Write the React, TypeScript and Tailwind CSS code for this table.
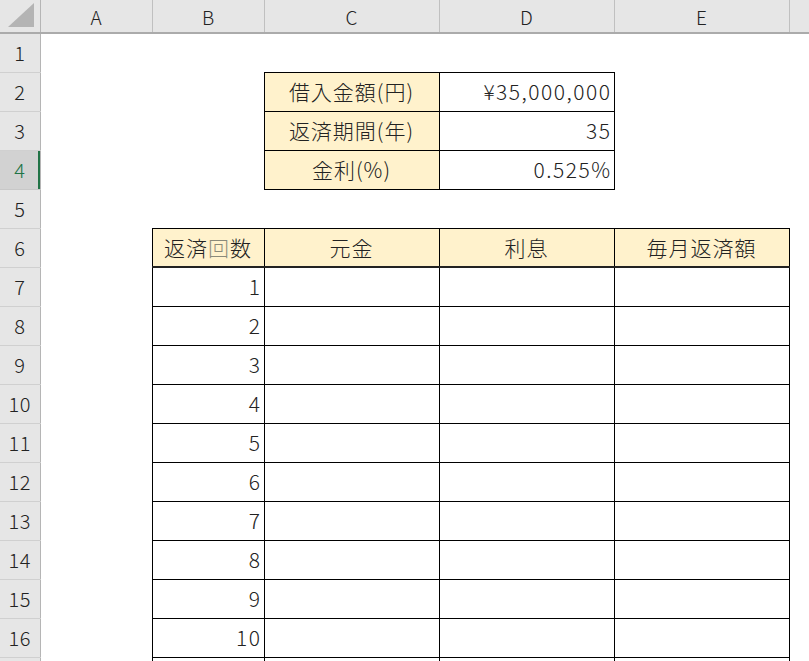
import React from "react";

const cols = ["A", "B", "C", "D", "E", ""];
const colWidths = [40, 112, 112, 175, 175, 175, 20];

const loanInfo = [
  { label: "借入金額(円)", value: "¥35,000,000" },
  { label: "返済期間(年)", value: "35" },
  { label: "金利(%)", value: "0.525%" },
];

const font = { fontFamily: '"Noto Sans CJK JP", "Noto Sans", sans-serif' };

function RowHead({ n, selected }: { n: number; selected?: boolean }) {
  return (
    <td
      className={
        selected
          ? "relative p-0 text-center text-[20px] font-light tracking-[0.5px] text-[#217346] bg-[#d2d2d2] border-b border-b-[#c8c8c8] border-r border-r-[#b5b5b5]"
          : "p-0 text-center text-[20px] font-light tracking-[0.5px] text-[#222] bg-[#e6e6e6] border-b border-b-[#d0d0d0] border-r border-r-[#b5b5b5]"
      }
    >
      {n <= 16 ? n : ""}
      {selected && <span className="absolute right-0 top-0 h-full w-[2px] bg-[#217346]" />}
    </td>
  );
}

const yellow =
  "p-0 bg-[#fff2cc] border border-black text-center text-[21px] font-light tracking-[1px] text-[#222] whitespace-nowrap";
const plain =
  "p-0 bg-white border border-black text-right pr-[2px] text-[21px] font-light tracking-[1.5px] text-[#222] whitespace-nowrap";

export default function App() {
  const rows: React.ReactNode[] = [];

  for (let r = 1; r <= 17; r++) {
    let cells: React.ReactNode;
    if (r >= 2 && r <= 4) {
      const info = loanInfo[r - 2];
      cells = (
        <>
          <td />
          <td />
          <td className={yellow}>{info.label}</td>
          <td className={plain}>{info.value}</td>
          <td />
          <td />
        </>
      );
    } else if (r === 6) {
      cells = (
        <>
          <td />
          <td className={yellow + " border-b-2 border-b-[#222]"}>
            返済<span className="text-[#8a8a7a]">回</span>数
          </td>
          <td className={yellow + " border-b-2 border-b-[#222]"}>元金</td>
          <td className={yellow + " border-b-2 border-b-[#222]"}>利息</td>
          <td className={yellow + " border-b-2 border-b-[#222]"}>毎月返済額</td>
          <td />
        </>
      );
    } else if (r >= 7) {
      cells = (
        <>
          <td />
          <td className={plain}>{r <= 16 ? r - 6 : ""}</td>
          <td className={plain} />
          <td className={plain} />
          <td className={plain} />
          <td />
        </>
      );
    } else {
      cells = (
        <>
          <td />
          <td />
          <td />
          <td />
          <td />
          <td />
        </>
      );
    }
    rows.push(
      <tr key={r} className="h-[39px]">
        <RowHead n={r} selected={r === 4} />
        {cells}
      </tr>
    );
  }

  return (
    <div className="h-screen w-full overflow-hidden bg-white" style={font}>
      <table className="table-fixed border-collapse w-[809px] leading-none">
        <colgroup>
          {colWidths.map((w, i) => (
            <col key={i} style={{ width: w }} />
          ))}
        </colgroup>
        <thead>
          <tr className="h-[33px]">
            <th className="relative p-0 bg-[#e6e6e6] border-r border-r-[#b5b5b5] border-b-2 border-b-[#ababab]">
              <svg className="absolute left-0 top-0" width="40" height="33" viewBox="0 0 40 33">
                <polygon points="8,27 34,27 34,3" fill="#b4b4b4" />
              </svg>
            </th>
            {cols.map((c, i) => (
              <th
                key={i}
                className="p-0 bg-[#e6e6e6] font-light text-[19px] text-[#222] border-r border-r-[#c0c0c0] border-b-2 border-b-[#ababab]"
              >
                {c}
              </th>
            ))}
          </tr>
        </thead>
        <tbody>{rows}</tbody>
      </table>
    </div>
  );
}
